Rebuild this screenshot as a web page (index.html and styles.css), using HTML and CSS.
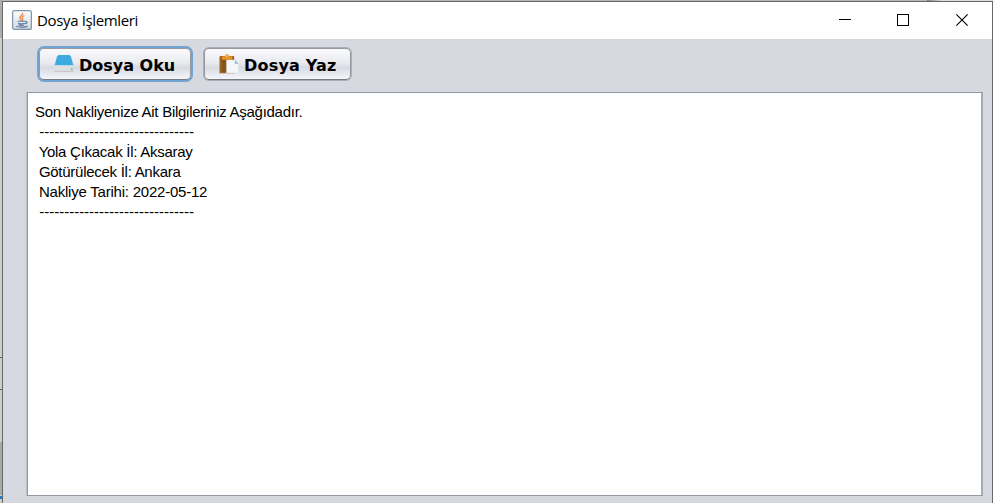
FILE: index.html
```html
<!DOCTYPE html>
<html lang="tr">
<head>
<meta charset="utf-8">
<title>Dosya İşlemleri</title>
<link rel="stylesheet" href="styles.css">
</head>
<body>
<div class="desktop">
  <div class="window">
    <header class="titlebar">
      <svg class="app-icon" width="20" height="20" viewBox="0 0 20 20">
        <defs><linearGradient id="ib" x1="0" y1="0" x2="0" y2="1"><stop offset="0" stop-color="#fdfdfd"/><stop offset="1" stop-color="#d3dae2"/></linearGradient></defs>
        <rect x=".6" y=".6" width="18.8" height="18.8" rx="2" fill="url(#ib)" stroke="#7d94ab" stroke-width="1.2"/>
        <path d="M10.5 2.8C12 5 7 6 8 8.2c.3 1 1.300 1.500 1.600 2.400M12.300 5.500C9 7 10 8 10.800 9c.6.8 0 1.300-.6 1.800" fill="none" stroke="#ee8540" stroke-width="1.300"/>
        <path d="M5.500 11.300h7.500M6 13.200c2 .8 5 .7 6.600.1M6.500 14.900c2 .6 4 .5 5.600 0M13 11.300c3-.6 2.600 2-.2 2.700M4 16c1 1.500 10 1.600 11.500-.2" fill="none" stroke="#57799a" stroke-width="1.100"/>
      </svg>
      <h1 class="title">Dosya İşlemleri</h1>
      <svg class="controls" width="153" height="37" viewBox="0 0 153 37" fill="none" stroke="#000">
        <path d="M0 17.500h12M58.500 12.500h11v11h-11z" shape-rendering="crispEdges"/>
        <path d="M117.300 12.300l11.400 11.400M128.700 12.300l-11.400 11.400" stroke-width="1.100"/>
      </svg>
    </header>
    <main class="content">
      <div class="toolbar">
        <button class="button focused">
          <svg width="20" height="20" viewBox="0 0 20 20">
            <defs><linearGradient id="db" x1="0" y1="0" x2="0" y2="1"><stop offset="0" stop-color="#40a9dd"/><stop offset="1" stop-color="#39abe3"/></linearGradient></defs>
            <path d="M3 2.500Q3.500 1 5 1h10q1.500 0 2 1.500l2.500 9.300H.5z" fill="url(#db)"/>
            <path d="M.8 11.200h18.400l.6.900v4.700q0 .8-.8.800H1q-.8 0-.8-.8v-4.700z" fill="#dfe0e1"/>
            <path d="M.5 17.300h19" stroke="#c2c4c7"/>
            <rect x="17" y="14" width="1.700" height="2" fill="#71d27c"/>
          </svg>
          <span>Dosya Oku</span>
        </button>
        <button class="button">
          <svg width="20" height="20" viewBox="0 0 20 20">
            <path d="M.5 3q0-1 1-1h12.700q1 0 1 1v16.300H.5z" fill="#9c661f"/>
            <path d="M2.500 4.500h10v13h-10z" fill="#865417"/>
            <path d="M3 5.800V3q0-.8 1-.8h1.600Q6 .2 8 .2t2.400 2h1.800q1 0 1 .8v2.800z" fill="#e9942b"/>
            <circle cx="8" cy="2" r=".8" fill="#fff0d6"/>
            <path d="M7.500 6h8.300l3.700 3.700v9.300h-12z" fill="#f4f6f9" stroke="#d3d8df" stroke-width=".5"/>
            <path d="M15.800 6l3.700 3.700h-3.700z" fill="#8bbddc"/>
          </svg>
          <span class="wide">Dosya Yaz</span>
        </button>
      </div>
      <pre class="text-area"><span class="tight">Son Nakliyenize Ait Bilgileriniz Aşağıdadır.</span>
 -------------------------------
<span class="tight"> Yola Çıkacak İl: Aksaray
 Götürülecek İl: Ankara</span>
<span class="snug"> Nakliye Tarihi: 2022-05-12</span>
 -------------------------------</pre>
    </main>
  </div>
</div>
</body>
</html>
```
FILE: styles.css
```css
* { box-sizing: border-box; }
body { margin: 0; overflow: hidden; }

.desktop {
  width: 993px;
  height: 503px;
  padding: 1px 0 0 2px;
  background:
    linear-gradient(#606060, #606060) 0 357px / 2px 1px no-repeat,
    linear-gradient(#606060, #606060) 0 389px / 2px 1px no-repeat,
    linear-gradient(#1f7ad2, #1f7ad2) 0 496px / 2px 3px no-repeat,
    linear-gradient(#a9a9a6, #a9a9a6) 0 442px / 2px 53px no-repeat,
    linear-gradient(#adadad, #adadad) 0 0 / 2px 38px no-repeat,
    linear-gradient(90deg, #b9b9b9 927px, #777 927px, #dedede 942px) 0 0 / 993px 1px no-repeat,
    #cdcdc9;
}

.window {
  display: flex;
  flex-direction: column;
  height: 502px;
  border: 1px solid #686868;
  border-bottom: 0;
  background: #d6d9df;
}

.titlebar {
  display: flex;
  flex: none;
  height: 37px;
  padding-left: 9px;
  background: #fff;
}

.app-icon { margin: 8px 5px 0 0; }

.title {
  margin: 0;
  font: 400 15px/37px "Open Sans", "Noto Sans", sans-serif;
  letter-spacing: -0.36px;
  color: #000;
}

.controls { margin-left: auto; }

.content {
  display: flex;
  flex: 1;
  flex-direction: column;
  padding: 9px 9px 7px 24px;
}

.toolbar {
  display: flex;
  gap: 13px;
  height: 44px;
  padding-left: 12px;
}

.button {
  display: flex;
  align-items: center;
  gap: 5px;
  width: 147px;
  height: 32px;
  padding: 0 0 0 14px;
  border: 1px solid #9699a0;
  border-bottom-color: #777b83;
  border-radius: 5px;
  background: linear-gradient(#fafafc, #e9ebef 45%, #d7dae2 62%, #f4f6fb);
  box-shadow: 0 0 0 1px #a9adb5;
  color: #000;
  font: bold 16px/20px "DejaVu Sans", sans-serif;
  white-space: nowrap;
}

.button svg { flex: none; }

.button span { padding-top: 3px; }

.wide { letter-spacing: 0.2px; }

.focused {
  width: 152px;
  box-shadow: 0 0 0 2px #73a4d1;
}

.text-area {
  flex: 1;
  margin: 0;
  padding: 9px 7px;
  border: 1px solid #9297a1;
  border-width: 1px 2px 1px 1px;
  border-right-color: #a5aab5;
  box-shadow: -1px 0 0 #bbc0ca;
  background: #fff;
  color: #000;
  font: 15px/20px "Liberation Sans", Arial, sans-serif;
}

.tight { letter-spacing: -0.27px; }
.snug { letter-spacing: -0.22px; }
```
